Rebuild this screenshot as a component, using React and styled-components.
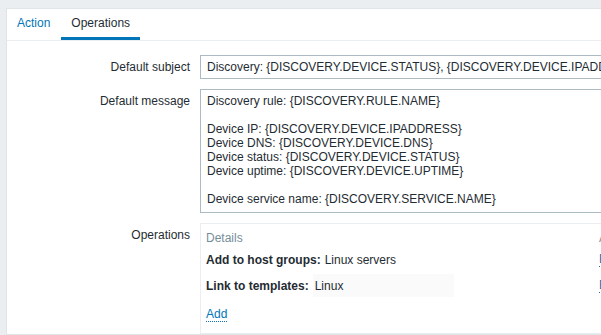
import React from 'react';
import styled, { createGlobalStyle } from 'styled-components';

const GlobalStyle = createGlobalStyle`
  html, body {
    margin: 0;
    padding: 0;
    background: #ebeef0;
    overflow: hidden;
  }
  body {
    font-family: "Liberation Sans", Arial, sans-serif;
    font-size: 12px;
    color: #1f2c33;
  }
`;

const Page = styled.div`
  padding: 8px 0 0 6px;
  height: 100vh;
  box-sizing: border-box;
`;

const Panel = styled.section`
  background: #fff;
  border: 1px solid #dfe4e7;
  border-right: none;
  height: 100%;
  box-sizing: border-box;
`;

const TabBar = styled.ul`
  display: flex;
  list-style: none;
  margin: 0;
  padding: 0;
  border-bottom: 1px solid #ebeef0;
`;

const Tab = styled.li`
  padding: 0 10px;
  margin-right: 1px;
  line-height: 28px;
  border-bottom: 3px solid ${p => (p.$active ? '#0275b8' : 'transparent')};
  color: ${p => (p.$active ? '#1f2c33' : '#0275b8')};
  cursor: pointer;
`;

const Form = styled.div`
  display: grid;
  grid-template-columns: 193px 600px;
  row-gap: 10px;
  padding-top: 14px;
`;

const Label = styled.label`
  text-align: right;
  padding-right: 10px;
  line-height: 24px;
`;

const Input = styled.input`
  display: block;
  box-sizing: border-box;
  width: 453px;
  height: 24px;
  padding: 0 6px;
  border: 1px solid #acbbc2;
  font: inherit;
  color: #1f2c33;
  outline: none;
`;

const TextArea = styled.textarea`
  display: block;
  box-sizing: border-box;
  width: 453px;
  height: 124px;
  padding: 4px 6px;
  border: 1px solid #acbbc2;
  font: inherit;
  line-height: 14px;
  color: #1f2c33;
  resize: none;
  outline: none;
  overflow: hidden;
`;

const OpsBox = styled.div`
  border: 1px solid #ebeef0;
  border-right: none;
  padding: 5px 5px 12px;
`;

const OpsTable = styled.div`
  display: grid;
  grid-template-columns: 393px 120px;
`;

const HeadCell = styled.div`
  color: #768d99;
  line-height: 18px;
  padding-bottom: 1px;
`;

const Cell = styled.div`
  display: flex;
  align-items: center;
  height: ${p => p.$h}px;
`;

const Strong = styled.b`
  font-weight: bold;
  margin-right: 4px;
`;

const Template = styled.span`
  display: inline-flex;
  align-items: center;
  width: 141px;
  height: 23px;
  padding-left: 2px;
  background: #fafafa;
  box-sizing: border-box;
`;

const LinkBtn = styled.a`
  color: #0275b8;
  text-decoration: none;
  border-bottom: 1px dotted #0275b8;
  margin-right: 8px;
  line-height: 13px;
  cursor: pointer;
`;

const AddRow = styled.div`
  margin-top: 8px;
  line-height: 14px;
`;

const message = `Discovery rule: {DISCOVERY.RULE.NAME}

Device IP: {DISCOVERY.DEVICE.IPADDRESS}
Device DNS: {DISCOVERY.DEVICE.DNS}
Device status: {DISCOVERY.DEVICE.STATUS}
Device uptime: {DISCOVERY.DEVICE.UPTIME}

Device service name: {DISCOVERY.SERVICE.NAME}`;

const App = () => {
  return (
    <Page>
      <GlobalStyle />
      <Panel>
        <TabBar>
          <Tab>Action</Tab>
          <Tab $active>Operations</Tab>
        </TabBar>
        <Form>
          <Label>Default subject</Label>
          <div>
            <Input
              readOnly
              value="Discovery: {DISCOVERY.DEVICE.STATUS}, {DISCOVERY.DEVICE.IPADDRESS}"
            />
          </div>
          <Label>Default message</Label>
          <div>
            <TextArea readOnly value={message} />
          </div>
          <Label>Operations</Label>
          <OpsBox>
            <OpsTable>
              <HeadCell>Details</HeadCell>
              <HeadCell>Action</HeadCell>
              <Cell $h={24}>
                <Strong>Add to host groups:</Strong> Linux servers
              </Cell>
              <Cell $h={24}>
                <LinkBtn>Edit</LinkBtn>
                <LinkBtn>Remove</LinkBtn>
              </Cell>
              <Cell $h={27}>
                <Strong>Link to templates:</Strong>
                <Template>Linux</Template>
              </Cell>
              <Cell $h={27}>
                <LinkBtn>Edit</LinkBtn>
                <LinkBtn>Remove</LinkBtn>
              </Cell>
            </OpsTable>
            <AddRow>
              <LinkBtn>Add</LinkBtn>
            </AddRow>
          </OpsBox>
        </Form>
      </Panel>
    </Page>
  );
};

export default App;
